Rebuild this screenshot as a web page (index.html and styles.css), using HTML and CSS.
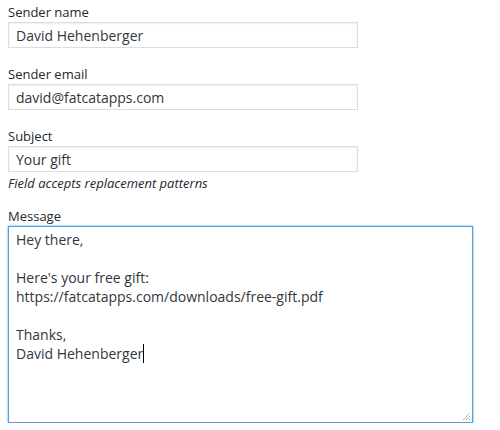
FILE: index.html
```html
<!DOCTYPE html>
<html>
<head>
<meta charset="utf-8">
<link rel="stylesheet" href="styles.css">
</head>
<body>
<form class="form">
  <div class="field">
    <label class="label">Sender name</label>
    <div class="input">David Hehenberger</div>
  </div>
  <div class="field">
    <label class="label">Sender email</label>
    <div class="input">david@fatcatapps.com</div>
  </div>
  <div class="field">
    <label class="label">Subject</label>
    <div class="input">Your gift</div>
    <p class="note">Field accepts replacement patterns</p>
  </div>
  <div class="field field-message">
    <label class="label">Message</label>
    <div class="textarea">Hey there,

Here's your free gift:
https://fatcatapps.com/downloads/free-gift.pdf

Thanks,
David Hehenberger<span class="caret"></span>
      <svg class="grip" width="9" height="9" viewBox="0 0 9 9"><path d="M1 8 L8 1 M4 8 L8 4 M7 8 L8 7" stroke="#777" stroke-width="1" fill="none" stroke-dasharray="1 1"/></svg>
    </div>
  </div>
</form>
</body>
</html>
```
FILE: styles.css
```css
html, body {
  margin: 0;
  padding: 0;
  background: #fff;
}
body {
  font-family: "Open Sans", "Noto Sans", sans-serif;
  font-size: 14px;
  line-height: 19px;
  color: #23282d;
}
.form {
  display: flex;
  flex-direction: column;
  padding: 3px 0 0 8px;
  gap: 17px;
}
.field {
  display: flex;
  flex-direction: column;
  align-items: flex-start;
}
.label {
  display: block;
  font-size: 13px;
  line-height: 19px;
  color: #23282d;
}
.input {
  box-sizing: border-box;
  width: 350px;
  height: 26px;
  border: 1px solid #ddd;
  box-shadow: inset 0 1px 2px rgba(0,0,0,0.07);
  padding: 2px 7px 0;
  font-size: 14px;
  line-height: 21px;
  color: #32373c;
}
.note {
  margin: 2px 0 0;
  font-style: italic;
  font-size: 13px;
  line-height: 18px;
  color: #23282d;
}
.field-message {
  margin-top: -2px;
}
.textarea {
  position: relative;
  box-sizing: border-box;
  width: 465px;
  height: 197px;
  border: 1px solid #5b9dd9;
  box-shadow: 0 0 2px rgba(30,140,190,0.8);
  padding: 3px 7px;
  white-space: pre-wrap;
  font-size: 14px;
  line-height: 19px;
  color: #32373c;
}
.caret {
  display: inline-block;
  width: 1px;
  height: 19px;
  background: #000;
  vertical-align: top;
}
.grip {
  position: absolute;
  right: 1px;
  bottom: 1px;
}
```
